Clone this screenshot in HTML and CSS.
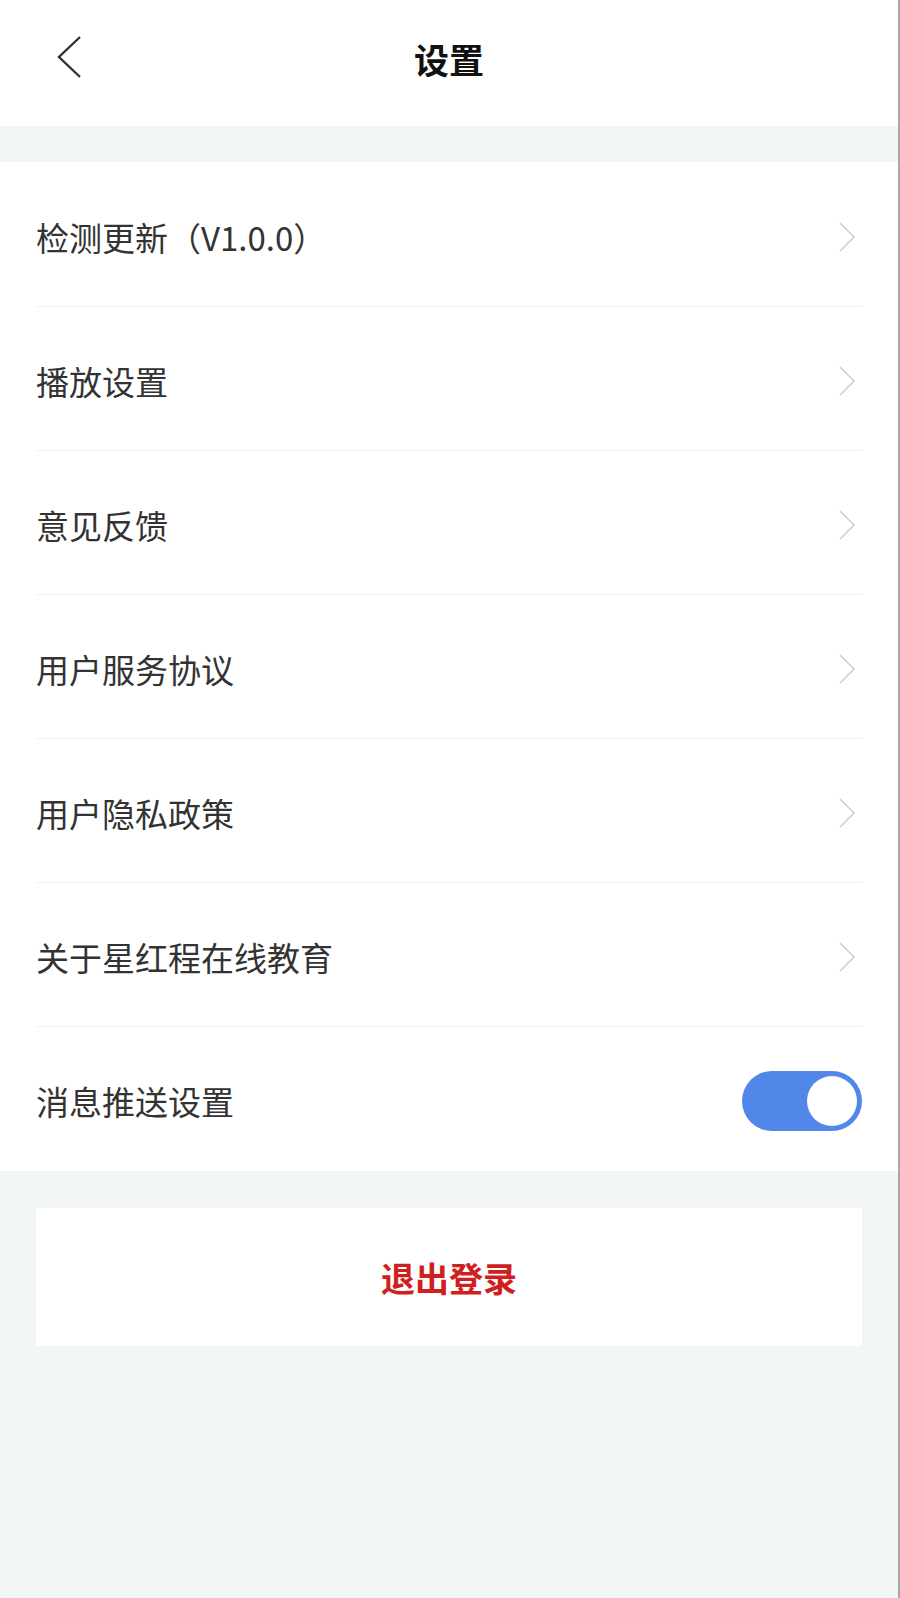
FILE: index.html
```html
<!DOCTYPE html>
<html lang="zh-CN">
    <head>
        <meta charset="UTF-8">
        <meta name="viewport" content="width=device-width, initial-scale=1.0">
        <title>设置</title>
        <link rel="stylesheet" href="styles.css">
    </head>
    <body>
        <div id="page">
            <div class="header">
                <span class="back">
                    <svg width="28" height="44" viewBox="0 0 28 44">
                        <polyline points="25,2 4,22 25,42" fill="none" stroke="#333" stroke-width="2.4" stroke-linejoin="miter"/>
                    </svg>
                </span>
                <h1>设置</h1>
            </div>

            <div class="gap"></div>

            <div class="list">
                <div class="row">
                    <span class="label">检测更新（V1.0.0）</span>
                    <svg class="arrow" width="18" height="32" viewBox="0 0 18 32"><polyline points="2,2 16,16 2,30" fill="none" stroke="#cfcfcf" stroke-width="1.6"/></svg>
                </div>
                <div class="row">
                    <span class="label">播放设置</span>
                    <svg class="arrow" width="18" height="32" viewBox="0 0 18 32"><polyline points="2,2 16,16 2,30" fill="none" stroke="#cfcfcf" stroke-width="1.6"/></svg>
                </div>
                <div class="row">
                    <span class="label">意见反馈</span>
                    <svg class="arrow" width="18" height="32" viewBox="0 0 18 32"><polyline points="2,2 16,16 2,30" fill="none" stroke="#cfcfcf" stroke-width="1.6"/></svg>
                </div>
                <div class="row">
                    <span class="label">用户服务协议</span>
                    <svg class="arrow" width="18" height="32" viewBox="0 0 18 32"><polyline points="2,2 16,16 2,30" fill="none" stroke="#cfcfcf" stroke-width="1.6"/></svg>
                </div>
                <div class="row">
                    <span class="label">用户隐私政策</span>
                    <svg class="arrow" width="18" height="32" viewBox="0 0 18 32"><polyline points="2,2 16,16 2,30" fill="none" stroke="#cfcfcf" stroke-width="1.6"/></svg>
                </div>
                <div class="row">
                    <span class="label">关于星红程在线教育</span>
                    <svg class="arrow" width="18" height="32" viewBox="0 0 18 32"><polyline points="2,2 16,16 2,30" fill="none" stroke="#cfcfcf" stroke-width="1.6"/></svg>
                </div>
                <div class="row last">
                    <span class="label">消息推送设置</span>
                    <span class="switch on"><span class="knob"></span></span>
                </div>
            </div>

            <div class="logout-wrap">
                <button type="button" class="logout">退出登录</button>
            </div>
        </div>
    </body>
</html>
```

FILE: styles.css
```css
body {
    margin: 0;
    padding: 0;
    font-family: "Noto Sans CJK SC", "Noto Sans", Arial, sans-serif;
    background-color: #f3f6f7;
}

#page {
    min-height: 1598px;
    background-color: #f3f6f7;
    border-right: 2px solid #a8a8a8;
    box-sizing: border-box;
}

.header {
    height: 126px;
    background-color: #fff;
    display: flex;
    align-items: center;
    justify-content: center;
    position: relative;
    padding-bottom: 10px;
    box-sizing: border-box;
}

.back {
    position: absolute;
    left: 55px;
    top: 35px;
    display: flex;
}

h1 {
    margin: 0;
    font-size: 35px;
    font-weight: bold;
    color: #111;
}

.gap {
    height: 36px;
}

.list {
    background-color: #fff;
}

.row {
    height: 144px;
    margin: 0 36px;
    display: flex;
    align-items: center;
    justify-content: space-between;
    border-bottom: 1px solid #f0f0f0;
    box-sizing: border-box;
    padding-top: 4px;
}

.row:first-child {
    height: 145px;
    padding-top: 6px;
}

.row.last {
    border-bottom: none;
    height: 144px;
}

.label {
    font-size: 33px;
    color: #333;
}

.arrow {
    margin-right: 6px;
}

.switch {
    width: 120px;
    height: 60px;
    border-radius: 30px;
    background-color: #5287ea;
    display: flex;
    align-items: center;
    justify-content: flex-end;
    padding: 0 5px;
    box-sizing: border-box;
}

.knob {
    width: 50px;
    height: 50px;
    border-radius: 50%;
    background-color: #fff;
}

.logout-wrap {
    padding: 37px 36px 0 36px;
}

.logout {
    width: 100%;
    height: 138px;
    background-color: #fff;
    border: none;
    font-family: "Noto Sans CJK SC", "Noto Sans", Arial, sans-serif;
    font-size: 34px;
    font-weight: bold;
    color: #d01f1f;
    cursor: pointer;
}
```
